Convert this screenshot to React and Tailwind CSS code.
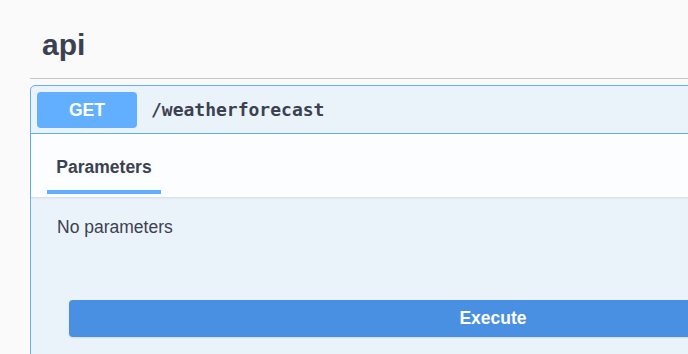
import React from 'react';

const sans = { fontFamily: '"Liberation Sans", Arial, sans-serif' };

function OpSummary() {
  return (
    <div className="flex items-center border-b border-[#61affe] pt-[6px] pb-[5px] pl-[6px]">
      <span className="flex h-[36px] w-[100px] items-center justify-center rounded-[4px] bg-[#61affe] text-[17.5px] font-bold leading-[21px] text-white">
        GET
      </span>
      <span
        className="ml-[14px] text-[18px] font-bold leading-[24px] text-[#3b4151]"
        style={{ fontFamily: '"DejaVu Sans Mono", "Liberation Mono", monospace' }}
      >
        /weatherforecast
      </span>
    </div>
  );
}

function TabHeader() {
  return (
    <div className="h-[63px] bg-white/80 pl-[16px] pt-[23px] shadow-[0_1px_2px_rgba(0,0,0,0.1)]">
      <div className="flex w-[114px] flex-col items-center">
        <span className="text-[17.5px] font-bold leading-[21px] text-[#3b4151]">Parameters</span>
        <span className="mt-[12px] h-[4px] w-full bg-[#61affe]" />
      </div>
    </div>
  );
}

export default function App() {
  return (
    <div className="h-[354px] w-[688px] overflow-hidden bg-[#fafafa] pl-[30px]" style={sans}>
      <div className="w-[900px] border-b border-[#c4c5c9] pb-[15px] pl-[12px] pt-[27px]">
        <h3 className="text-[30px] font-bold leading-[36px] text-[#3b4151]">api</h3>
      </div>

      <div className="mt-[6px] w-[900px] rounded-[5px] border border-[#61affe] bg-[#ebf3fa] pb-[40px]">
        <OpSummary />
        <TabHeader />
        <div className="pb-[20px] pl-[26px] pt-[20px]">
          <p className="text-[17.5px] leading-[21px] text-[#3b4151]">No parameters</p>
        </div>
        <div className="pl-[38px] pt-[42px]">
          <button className="flex h-[37px] w-[848px] items-center justify-center rounded-[4px] bg-[#4990e2] text-[17.5px] font-bold leading-[21px] text-white shadow-[0_1px_2px_rgba(0,0,0,0.1)]">
            Execute
          </button>
        </div>
      </div>
    </div>
  );
}
